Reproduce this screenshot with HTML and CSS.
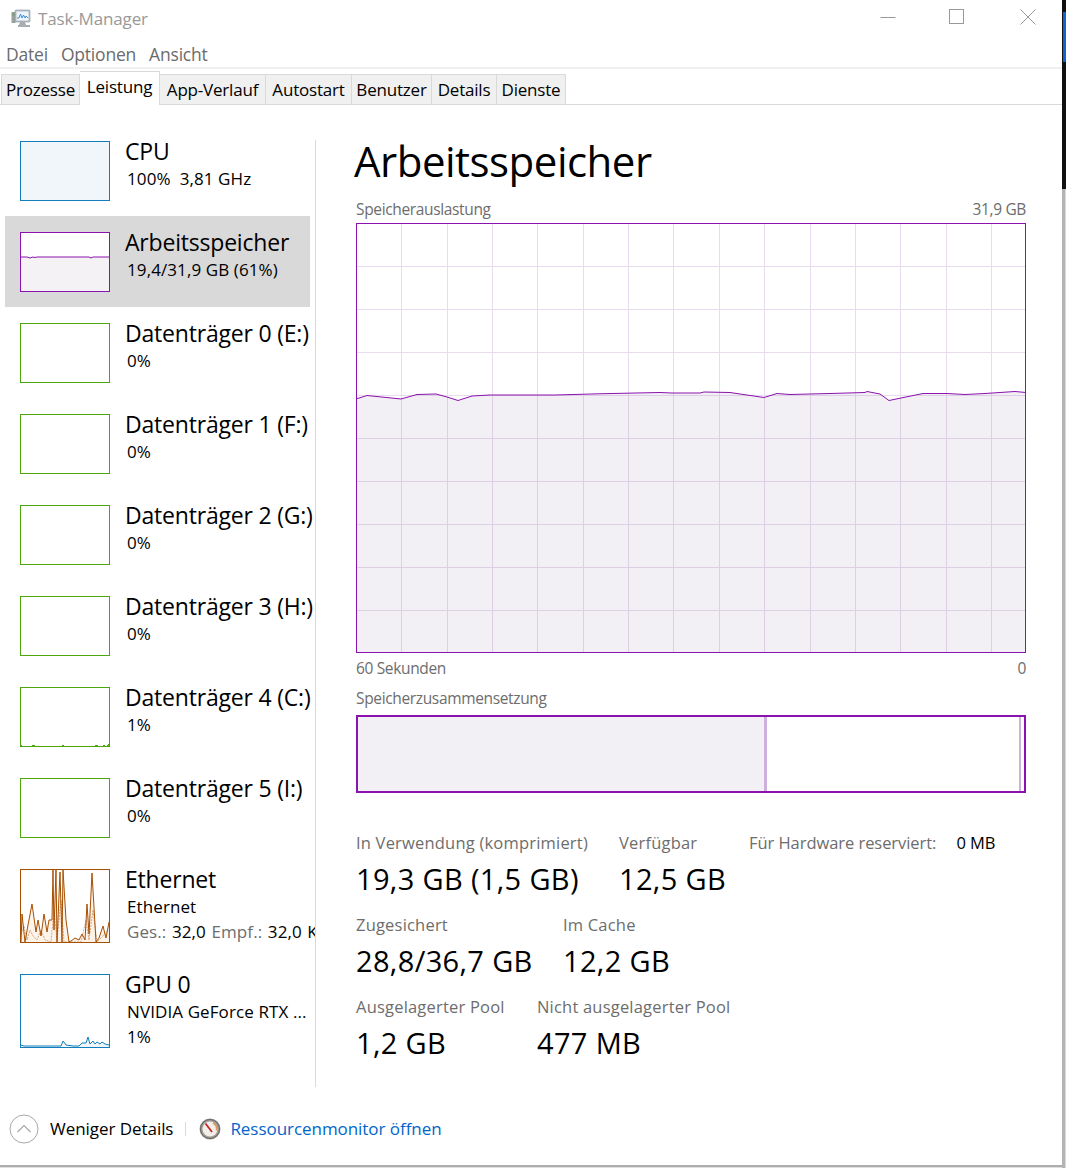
FILE: index.html
```html
<!DOCTYPE html>
<html lang="de">
<head>
  <meta charset="UTF-8">
  <title>Task-Manager</title>
  <link rel="stylesheet" href="styles.css">
</head>
<body>

  <div class="fenster">
    <div class="titelleiste">
      <svg class="app-icon" width="20" height="20" viewBox="0 0 20 20">
        <rect x="0.5" y="4" width="4" height="11" fill="#9aa29c"/>
        <rect x="1.5" y="5.5" width="2" height="2" fill="#5da35d"/>
        <rect x="4" y="2" width="15" height="12" rx="1" fill="#b4bcc6" stroke="#8b939c" stroke-width="0.6"/>
        <rect x="5.5" y="3.5" width="12" height="9" fill="#eef5fb"/>
        <polyline points="6,10 8,10 9.5,6 11,10 12.5,7 14,10 15,8 17,10" fill="none" stroke="#3f8fd6" stroke-width="1"/>
        <path d="M9 14h5l1 3h4v2H7v-2h1z" fill="#a9adb0"/>
      </svg>
      <span class="titel-text">Task-Manager</span>
      <div class="fenster-knoepfe">
        <svg class="knopf-min" width="16" height="16" viewBox="0 0 16 16"><path d="M0.5 8.5h15" stroke="#999" fill="none"/></svg>
        <svg class="knopf-max" width="16" height="16" viewBox="0 0 16 16"><rect x="0.5" y="0.5" width="14" height="14" stroke="#999" fill="none"/></svg>
        <svg class="knopf-zu" width="16" height="16" viewBox="0 0 16 16"><path d="M0.5 0.5l15 15M15.5 0.5l-15 15" stroke="#999" fill="none"/></svg>
      </div>
    </div>

    <div class="menue">
      <span>Datei</span>
      <span>Optionen</span>
      <span>Ansicht</span>
    </div>

    <div class="tabs">
      <div class="tab">Prozesse</div>
      <div class="tab tab-aktiv">Leistung</div>
      <div class="tab">App-Verlauf</div>
      <div class="tab">Autostart</div>
      <div class="tab">Benutzer</div>
      <div class="tab">Details</div>
      <div class="tab">Dienste</div>
    </div>

    <div class="inhalt">
      <div class="seitenleiste">

        <div class="eintrag">
          <div class="thumb thumb-cpu"></div>
          <div class="info">
            <div class="info-titel">CPU</div>
            <div class="info-text">100%&nbsp; 3,81 GHz</div>
          </div>
        </div>

        <div class="eintrag eintrag-aktiv">
          <div class="thumb thumb-ram">
            <svg width="88" height="58" viewBox="0 0 88 58">
              <polygon points="0,24 6,24 9,25 12,24 14,24.5 16,24 68,24 70,25 72,24 88,24 88,58 0,58" fill="#f4f2f4"/>
              <polyline points="0,24 6,24 9,25 12,24 14,24.5 16,24 68,24 70,25 72,24 88,24" fill="none" stroke="#8b12ae"/>
            </svg>
          </div>
          <div class="info">
            <div class="info-titel">Arbeitsspeicher</div>
            <div class="info-text">19,4/31,9 GB (61%)</div>
          </div>
        </div>

        <div class="eintrag">
          <div class="thumb thumb-disk"></div>
          <div class="info">
            <div class="info-titel">Datenträger 0 (E:)</div>
            <div class="info-text">0%</div>
          </div>
        </div>

        <div class="eintrag">
          <div class="thumb thumb-disk"></div>
          <div class="info">
            <div class="info-titel">Datenträger 1 (F:)</div>
            <div class="info-text">0%</div>
          </div>
        </div>

        <div class="eintrag">
          <div class="thumb thumb-disk"></div>
          <div class="info">
            <div class="info-titel">Datenträger 2 (G:)</div>
            <div class="info-text">0%</div>
          </div>
        </div>

        <div class="eintrag">
          <div class="thumb thumb-disk"></div>
          <div class="info">
            <div class="info-titel">Datenträger 3 (H:)</div>
            <div class="info-text">0%</div>
          </div>
        </div>

        <div class="eintrag">
          <div class="thumb thumb-disk">
            <svg width="88" height="58" viewBox="0 0 88 58">
              <path d="M0 57.5h1M11 57.5h3M41 57.5h2M74 57.5h3M82 57.5h2M86 57.5h2M87 56.5h1" stroke="#4da60c" fill="none"/>
            </svg>
          </div>
          <div class="info">
            <div class="info-titel">Datenträger 4 (C:)</div>
            <div class="info-text">1%</div>
          </div>
        </div>

        <div class="eintrag">
          <div class="thumb thumb-disk"></div>
          <div class="info">
            <div class="info-titel">Datenträger 5 (I:)</div>
            <div class="info-text">0%</div>
          </div>
        </div>

        <div class="eintrag">
          <div class="thumb thumb-netz">
            <svg width="88" height="72" viewBox="0 0 88 72">
              <polygon points="0,72 1,44 4,72 7,55 11,34 15,62 17,50 20,66 23,44 26,62 28,50 31,50 32,0 33,60 35,0 36,72 39,2 41,72 42,0 45,50 48,72 50,71 54,68 58,70 61,64 64,70 66,34 68,64 71,3 75,72 78,68 82,56 85,68 88,52 88,72" fill="#fcf3eb"/>
              <polyline points="0,64 3,56 6,70 9,60 12,66 16,70 20,60 24,70 30,72 33,40 36,70 40,30 43,72 50,72 60,72 65,50 68,70 72,40 76,72 82,66 87,60" fill="none" stroke="#d9a67a" stroke-dasharray="2 1"/>
              <polyline points="0,72 1,44 4,72 7,55 11,34 15,62 17,50 20,66 23,44 26,62 28,50 31,50 32,0 33,60 35,0 36,72 39,2 41,72 42,0 45,50 48,72 50,71 54,68 58,70 61,64 64,70 66,34 68,64 71,3 75,72 78,68 82,56 85,68 88,52" fill="none" stroke="#a74f01"/>
            </svg>
          </div>
          <div class="info">
            <div class="info-titel">Ethernet</div>
            <div class="info-text">Ethernet</div>
            <div class="info-text info-netz"><span class="grau">Ges.:</span> 32,0 <span class="grau">Empf.:</span> 32,0 KBit/s</div>
          </div>
        </div>

        <div class="eintrag">
          <div class="thumb thumb-gpu">
            <svg width="88" height="72" viewBox="0 0 88 72">
              <polygon points="0,70 3,71 40,71 42,66 45,70 52,71 58,71 61,68 65,68 67,62 69,69 72,66 74,69 76,67 79,69 81,67 84,69 88,70 88,72 0,72" fill="#f1f6fa"/>
              <polyline points="0,70 3,71 40,71 42,66 45,70 52,71 58,71 61,68 65,68 67,62 69,69 72,66 74,69 76,67 79,69 81,67 84,69 88,70" fill="none" stroke="#117dbb"/>
            </svg>
          </div>
          <div class="info">
            <div class="info-titel">GPU 0</div>
            <div class="info-text">NVIDIA GeForce RTX ...</div>
            <div class="info-text">1%</div>
          </div>
        </div>

      </div>

      <div class="hauptbereich">
        <h1>Arbeitsspeicher</h1>
        <div class="zeile-label zeile-oben">
          <span>Speicherauslastung</span>
          <span>31,9 GB</span>
        </div>

        <svg class="diagramm" width="670" height="430" viewBox="0 0 670 430">
          <g stroke="#e9dcee" fill="none">
            <path d="M45.5 0v430M91.5 0v430M136.5 0v430M181.5 0v430M227.5 0v430M272.5 0v430M317.5 0v430M363.5 0v430M408.5 0v430M454.5 0v430M499.5 0v430M544.5 0v430M590.5 0v430M635.5 0v430"/>
            <path d="M0 43.5h670M0 86.5h670M0 129.5h670M0 172.5h670M0 215.5h670M0 258.5h670M0 301.5h670M0 344.5h670M0 387.5h670"/>
          </g>
          <polygon points="0,176 11,172.5 45,176 61,171.5 80,171 91,174 102,177.5 116,173 134,172 199,172 247,170.7 304,169.5 316,170 344,170 348,169 374,169.5 408,174.5 421,170.5 434,171.5 474,170.5 509,169.5 511,168.5 524,171 533,177.5 567,170.5 591,170.5 609,171.5 629,170.5 659,168.5 670,169.5 670,430 0,430" fill="#4a2a60" fill-opacity="0.07"/>
          <polyline points="0,176 11,172.5 45,176 61,171.5 80,171 91,174 102,177.5 116,173 134,172 199,172 247,170.7 304,169.5 316,170 344,170 348,169 374,169.5 408,174.5 421,170.5 434,171.5 474,170.5 509,169.5 511,168.5 524,171 533,177.5 567,170.5 591,170.5 609,171.5 629,170.5 659,168.5 670,169.5" fill="none" stroke="#8b12ae"/>
          <rect x="0.5" y="0.5" width="669" height="429" fill="none" stroke="#8b12ae"/>
        </svg>

        <div class="zeile-label zeile-unten">
          <span>60 Sekunden</span>
          <span>0</span>
        </div>
        <div class="zeile-label zeile-komp">
          <span>Speicherzusammensetzung</span>
        </div>

        <div class="komp-balken">
          <div class="komp-belegt"></div>
          <div class="komp-standby"></div>
          <div class="komp-frei"></div>
        </div>

        <div class="werte">
          <div class="werte-zeile werte-a">
            <div class="wert">
              <div class="wert-label">In Verwendung (komprimiert)</div>
              <div class="wert-zahl">19,3 GB (1,5 GB)</div>
            </div>
            <div class="wert">
              <div class="wert-label">Verfügbar</div>
              <div class="wert-zahl">12,5 GB</div>
            </div>
            <div class="wert">
              <div class="wert-label reserviert"><span>Für Hardware reserviert:</span><span class="reserviert-mb">0 MB</span></div>
            </div>
          </div>
          <div class="werte-zeile werte-b">
            <div class="wert">
              <div class="wert-label">Zugesichert</div>
              <div class="wert-zahl">28,8/36,7 GB</div>
            </div>
            <div class="wert">
              <div class="wert-label">Im Cache</div>
              <div class="wert-zahl">12,2 GB</div>
            </div>
          </div>
          <div class="werte-zeile werte-c">
            <div class="wert">
              <div class="wert-label">Ausgelagerter Pool</div>
              <div class="wert-zahl">1,2 GB</div>
            </div>
            <div class="wert">
              <div class="wert-label">Nicht ausgelagerter Pool</div>
              <div class="wert-zahl">477 MB</div>
            </div>
          </div>
        </div>
      </div>
    </div>

    <div class="fusszeile">
      <svg class="pfeil-kreis" width="30" height="30" viewBox="0 0 30 30">
        <circle cx="15" cy="15" r="14" fill="#fff" stroke="#a8a8a8"/>
        <polyline points="8.5,18 15,11.5 21.5,18" fill="none" stroke="#a8a8a8" stroke-width="1.2"/>
      </svg>
      <span class="weniger">Weniger Details</span>
      <span class="fuss-trenner"></span>
      <svg class="resmon" width="22" height="22" viewBox="0 0 22 22">
        <circle cx="11" cy="11" r="10.5" fill="#a09d98"/>
        <circle cx="11" cy="11" r="9.5" fill="none" stroke="#66635f"/>
        <circle cx="11" cy="11" r="7.5" fill="#f3eee8"/>
        <path d="M14 5a7 7 0 0 1 3.5 7.5" fill="none" stroke="#d9975a" stroke-width="1.5"/>
        <path d="M6.5 5.5L13 14" stroke="#c4262e" stroke-width="1.8"/>
      </svg>
      <span class="link">Ressourcenmonitor öffnen</span>
    </div>
  </div>

  <div class="desktop-rand">
    <div class="rand-dunkel"><div class="rand-blau"></div></div>
    <div class="rand-grau"></div>
  </div>

</body>
</html>
```

FILE: styles.css
```css
* {
  box-sizing: border-box;
}

body {
  margin: 0;
  height: 1168px;
  display: flex;
  overflow: hidden;
  background-color: #dedede;
  font-family: "Open Sans", "Noto Sans", sans-serif;
  font-size: 17px;
  letter-spacing: -0.2px;
  color: #000;
}

.fenster {
  width: 1062px;
  height: 1167px;
  background-color: #fff;
  border-bottom: 2px solid #adadad;
  display: flex;
  flex-direction: column;
  flex-shrink: 0;
}

/* Titelleiste */
.titelleiste {
  height: 36px;
  display: flex;
  align-items: center;
  padding-left: 11px;
  color: #999;
  flex-shrink: 0;
}

.app-icon {
  margin-right: 7px;
}

.titel-text {
  letter-spacing: -0.15px;
}

.fenster-knoepfe {
  margin-left: auto;
  margin-right: 26px;
  display: flex;
  padding-bottom: 3px;
}

.knopf-min {
  margin-right: 53px;
}

.knopf-max {
  margin-right: 55px;
}

.menue {
  height: 33px;
  padding: 6px 0 0 6px;
  display: flex;
  gap: 13px;
  font-size: 17.5px;
  color: #6b6b6b;
  line-height: 24px;
  border-bottom: 2px solid #f0f0f0;
  flex-shrink: 0;
}

/* Tabs */
.tabs {
  height: 36px;
  padding-left: 1px;
  display: grid;
  grid-template-columns: 79px 80px 106px 86px 80px 65px 69px;
  align-items: end;
  border-bottom: 1px solid #d9d9d9;
  flex-shrink: 0;
}

.tab {
  height: 30px;
  line-height: 30px;
  text-align: center;
  white-space: nowrap;
  background-color: #f0f0f0;
  border: 1px solid #d9d9d9;
  border-left: none;
  border-bottom: none;
}

.tab:first-child {
  border-left: 1px solid #d9d9d9;
}

.tab-aktiv {
  height: 34px;
  line-height: 30px;
  margin-bottom: -1px;
  background-color: #fff;
  position: relative;
}

/* Inhalt */
.inhalt {
  flex: 1;
  display: flex;
  min-height: 0;
}

.seitenleiste {
  width: 316px;
  margin-top: 35px;
  padding-left: 5px;
  border-right: 1px solid #d9d9d9;
  flex-shrink: 0;
}

.eintrag {
  display: flex;
  width: 305px;
  padding: 16px 0 15px 15px;
  gap: 15px;
  white-space: nowrap;
}

.eintrag:first-child {
  padding-top: 1px;
}

.eintrag-aktiv {
  background-color: #d9d9d9;
}

.thumb {
  width: 90px;
  height: 60px;
  border: 1px solid;
  flex-shrink: 0;
}

.thumb svg {
  display: block;
}

.thumb-cpu {
  border-color: #117dbb;
  background-color: #f1f6fa;
}

.thumb-ram {
  border-color: #8b12ae;
  background-color: #fff;
}

.thumb-disk {
  border-color: #4da60c;
  background-color: #fff;
}

.thumb-netz {
  height: 74px;
  border-color: #a74f01;
}

.thumb-gpu {
  height: 74px;
  border-color: #117dbb;
}

.info {
  margin: -3px 0 -4px;
}

.info-titel {
  font-size: 23px;
  line-height: 26px;
  letter-spacing: -0.2px;
}

.info-text {
  margin-left: 2px;
  line-height: 25px;
  letter-spacing: 0.1px;
}

.info-titel + .info-text {
  margin-top: 2px;
}

.info-netz {
  width: 188px;
  overflow: hidden;
  word-spacing: 1px;
}

.grau {
  color: #6d6d6d;
}

.hauptbereich {
  width: 710px;
  padding: 27px 0 0 40px;
}

h1 {
  margin: 0 0 9px -2px;
  font-size: 42px;
  font-weight: 400;
  line-height: 58px;
  letter-spacing: -0.5px;
}

.zeile-label {
  display: flex;
  justify-content: space-between;
  width: 670px;
  font-size: 15.5px;
  line-height: 20px;
  letter-spacing: -0.35px;
  color: #6d6d6d;
}

.diagramm {
  display: block;
  margin-top: 4px;
}

.zeile-unten {
  margin-top: 5px;
}

.zeile-komp {
  margin-top: 10px;
}

.komp-balken {
  width: 670px;
  height: 78px;
  margin-top: 7px;
  border: 2px solid #8b12ae;
  display: grid;
  grid-template-columns: 409px 252px 2px;
}

.komp-belegt {
  background-color: #f2f0f4;
  border-right: 3px solid #cdb0dc;
}

.komp-frei {
  background-color: #cdb0dc;
}

.werte {
  margin-top: 38px;
}

.werte-zeile {
  display: grid;
  height: 82px;
}

.werte-a {
  grid-template-columns: 263px 130px 1fr;
}

.werte-b {
  grid-template-columns: 207px 1fr;
}

.werte-c {
  grid-template-columns: 181px 1fr;
}

.wert-label {
  font-size: 16.5px;
  line-height: 24px;
  letter-spacing: 0.2px;
  color: #6d6d6d;
  white-space: nowrap;
}

.wert-zahl {
  font-size: 29px;
  line-height: 48px;
  letter-spacing: 0.35px;
  white-space: nowrap;
}

.reserviert {
  display: flex;
  gap: 20px;
  letter-spacing: -0.05px;
}

.reserviert-mb {
  color: #000;
}

/* Fusszeile */
.fusszeile {
  height: 78px;
  flex-shrink: 0;
  display: flex;
  align-items: center;
  padding: 5px 0 0 9px;
  letter-spacing: -0.05px;
}

.pfeil-kreis {
  margin-right: 11px;
}

.fuss-trenner {
  width: 1px;
  height: 14px;
  margin: 0 13px 0 12px;
  background-color: #d9d9d9;
}

.resmon {
  margin-right: 9px;
}

.link {
  color: #0066cc;
}

/* Desktop hinter dem Fenster */
.desktop-rand {
  flex: 1;
  display: flex;
  flex-direction: column;
}

.rand-dunkel {
  height: 189px;
  padding: 12px 0 0 1px;
  background-color: #111;
}

.rand-blau {
  height: 50px;
  background-color: #0f62d6;
}

.rand-grau {
  flex: 1;
  background-color: #dadada;
  border-left: 3px solid #b4b4b4;
}
```
